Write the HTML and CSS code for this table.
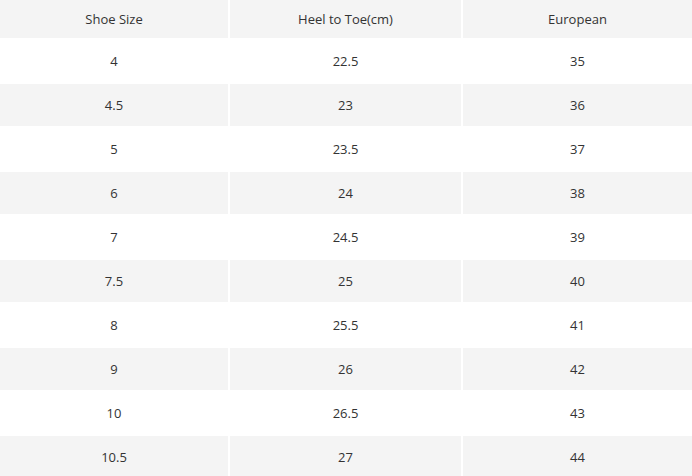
FILE: index.html
```html
<!DOCTYPE html>
<html>
<head>
<meta charset="utf-8">
<link rel="stylesheet" href="styles.css">
</head>
<body>
<div class="chart">
  <div class="row head"><div class="cell">Shoe Size</div><div class="cell">Heel to Toe(cm)</div><div class="cell">European</div></div>
  <div class="row"><div class="cell">4</div><div class="cell">22.5</div><div class="cell">35</div></div>
  <div class="row alt"><div class="cell">4.5</div><div class="cell">23</div><div class="cell">36</div></div>
  <div class="row"><div class="cell">5</div><div class="cell">23.5</div><div class="cell">37</div></div>
  <div class="row alt"><div class="cell">6</div><div class="cell">24</div><div class="cell">38</div></div>
  <div class="row"><div class="cell">7</div><div class="cell">24.5</div><div class="cell">39</div></div>
  <div class="row alt"><div class="cell">7.5</div><div class="cell">25</div><div class="cell">40</div></div>
  <div class="row"><div class="cell">8</div><div class="cell">25.5</div><div class="cell">41</div></div>
  <div class="row alt"><div class="cell">9</div><div class="cell">26</div><div class="cell">42</div></div>
  <div class="row"><div class="cell">10</div><div class="cell">26.5</div><div class="cell">43</div></div>
  <div class="row alt"><div class="cell">10.5</div><div class="cell">27</div><div class="cell">44</div></div>
</div>
</body>
</html>
```

FILE: styles.css
```css
html, body {
  margin: 0;
  padding: 0;
  background: #fff;
}
.chart {
  display: flex;
  flex-direction: column;
  gap: 2px;
  width: 692px;
  font-family: "Open Sans", "Noto Sans", sans-serif;
  font-size: 13px;
  color: #333;
}
.row {
  display: grid;
  grid-template-columns: 228px 231px 229px;
  column-gap: 2px;
  height: 42px;
}
.row.head {
  height: 38px;
}
.cell {
  display: flex;
  align-items: center;
  justify-content: center;
}
.head .cell, .alt .cell {
  background: #f4f4f4;
}
```
